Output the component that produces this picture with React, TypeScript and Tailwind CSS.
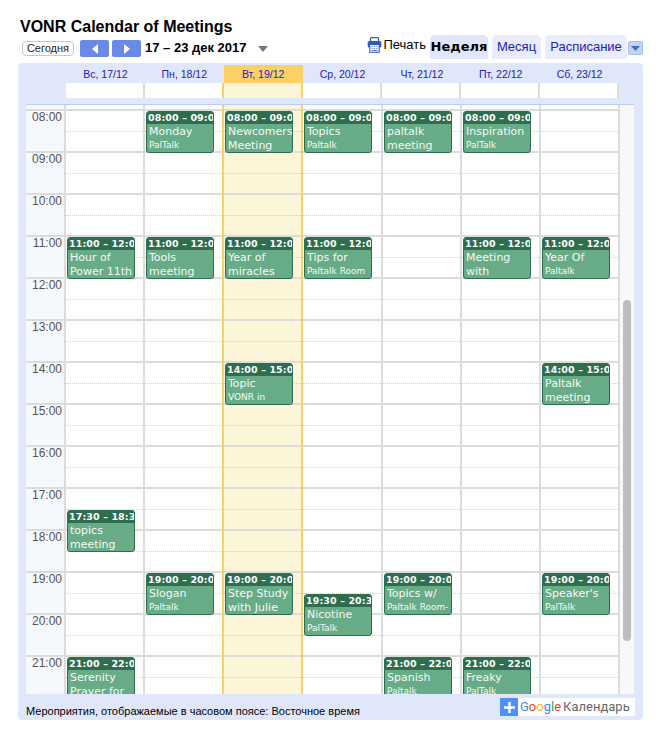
import React from "react";

type Ev = { day: number; hour: number; offset?: number; time: string; title: string[]; sub?: string };

const days = ["Вс, 17/12", "Пн, 18/12", "Вт, 19/12", "Ср, 20/12", "Чт, 21/12", "Пт, 22/12", "Сб, 23/12"];
const hours = [8, 9, 10, 11, 12, 13, 14, 15, 16, 17, 18, 19, 20, 21];
const colWidths = [79, 79, 79, 80, 79, 79, 79];

const events: Ev[] = [
  { day: 1, hour: 8, time: "08:00 – 09:00", title: ["Monday"], sub: "PalTalk" },
  { day: 2, hour: 8, time: "08:00 – 09:00", title: ["Newcomers", "Meeting"] },
  { day: 3, hour: 8, time: "08:00 – 09:00", title: ["Topics"], sub: "Paltalk" },
  { day: 4, hour: 8, time: "08:00 – 09:00", title: ["paltalk", "meeting"] },
  { day: 5, hour: 8, time: "08:00 – 09:00", title: ["Inspiration"], sub: "PalTalk" },
  { day: 0, hour: 11, time: "11:00 – 12:00", title: ["Hour of", "Power 11th"] },
  { day: 1, hour: 11, time: "11:00 – 12:00", title: ["Tools", "meeting"] },
  { day: 2, hour: 11, time: "11:00 – 12:00", title: ["Year of", "miracles"] },
  { day: 3, hour: 11, time: "11:00 – 12:00", title: ["Tips for"], sub: "Paltalk Room" },
  { day: 5, hour: 11, time: "11:00 – 12:00", title: ["Meeting", "with"] },
  { day: 6, hour: 11, time: "11:00 – 12:00", title: ["Year Of"], sub: "Paltalk" },
  { day: 2, hour: 14, time: "14:00 – 15:00", title: ["Topic"], sub: "VONR in" },
  { day: 6, hour: 14, time: "14:00 – 15:00", title: ["Paltalk", "meeting"] },
  { day: 0, hour: 17, offset: 21, time: "17:30 – 18:30", title: ["topics", "meeting"] },
  { day: 1, hour: 19, time: "19:00 – 20:00", title: ["Slogan"], sub: "Paltalk" },
  { day: 2, hour: 19, time: "19:00 – 20:00", title: ["Step Study", "with Julie"] },
  { day: 3, hour: 19, offset: 21, time: "19:30 – 20:30", title: ["Nicotine"], sub: "PalTalk" },
  { day: 4, hour: 19, time: "19:00 – 20:00", title: ["Topics w/"], sub: "Paltalk Room-" },
  { day: 6, hour: 19, time: "19:00 – 20:00", title: ["Speaker's"], sub: "PalTalk" },
  { day: 0, hour: 21, time: "21:00 – 22:00", title: ["Serenity", "Prayer for"] },
  { day: 4, hour: 21, time: "21:00 – 22:00", title: ["Spanish"], sub: "Paltalk" },
  { day: 5, hour: 21, time: "21:00 – 22:00", title: ["Freaky"], sub: "PalTalk" },
];

function EventCard({ ev }: { ev: Ev }) {
  return (
    <div
      className="absolute left-px w-[68px] h-[42px] rounded-[3px] border border-[#2e6e4f] bg-[#68ab87] overflow-hidden z-10 text-white font-['DejaVu_Sans',sans-serif]"
      style={{ top: ev.offset ?? 0 }}
    >
      <div className="h-3 bg-[#2e6e4f] pl-px text-[9.5px] leading-3 font-bold whitespace-nowrap overflow-hidden tracking-[0.1px]">
        {ev.time}
      </div>
      <div className="pl-0.5 pt-px">
        {ev.title.map((t) => (
          <div key={t} className="text-[11px] leading-[14px] whitespace-nowrap overflow-hidden text-[#f4faf6]">
            {t}
          </div>
        ))}
        {ev.sub && <div className="text-[9px] leading-[12px] whitespace-nowrap overflow-hidden text-[#f4faf6]">{ev.sub}</div>}
      </div>
    </div>
  );
}

function HourCell({ children, time }: { children?: React.ReactNode; time?: boolean }) {
  return (
    <div className="relative h-[42px] shrink-0 border-t-2 border-[#dcdcdc]">
      {!time && <div className="absolute left-0 right-0 top-[20px] border-t border-dotted border-[#cfcfcf]" />}
      {children}
    </div>
  );
}

function PrinterIcon() {
  return (
    <svg width="15" height="16" viewBox="0 0 15 16" fill="none" className="mr-px">
      <rect x="3.5" y="0.7" width="8" height="4" rx="1" stroke="#2f5fb5" strokeWidth="1.3" fill="#fff" />
      <rect x="0.7" y="4" width="13.6" height="6.5" rx="1.5" fill="#2f5fb5" />
      <rect x="2.8" y="7.5" width="9.4" height="7.8" fill="#fff" stroke="#2f5fb5" strokeWidth="1.1" />
      <path d="M4.5 9.5h1.2M6.9 9.5h1.2M9.3 9.5h1.2M4.5 11.5h1.2M6.9 11.5h1.2M9.3 11.5h1.2M4.5 13.5h6" stroke="#5b7fc4" strokeWidth="1" />
    </svg>
  );
}

function NavButton({ dir }: { dir: "l" | "r" }) {
  return (
    <div className="w-[29px] h-[17px] rounded-[2px] bg-[#6b8ae8] flex items-center justify-center">
      <svg width="6" height="10" viewBox="0 0 6 10">
        <path d={dir === "l" ? "M6 0v10L0 5z" : "M0 0v10l6-5z"} fill="#fff" />
      </svg>
    </div>
  );
}

export default function App() {
  return (
    <div className="w-[656px] h-[737px] bg-white relative overflow-hidden font-['Liberation_Sans',Arial,sans-serif] text-black">
      <div className="pl-5 pt-[17px] h-[40px] text-base leading-[19px] font-bold">VONR Calendar of Meetings</div>

      <div className="flex items-start h-[23px] pl-[22px]">
        <div className="mt-[1px] w-[52px] h-[15px] rounded-[4px] border border-[#c8c8c8] bg-white text-[11px] leading-[13px] text-center text-[#222]">
          Сегодня
        </div>
        <div className="ml-1.5 flex gap-[3px]">
          <NavButton dir="l" />
          <NavButton dir="r" />
        </div>
        <div className="ml-[4px] mt-[-1px] text-[13px] leading-[18px] font-bold whitespace-nowrap w-[113px]">17 – 23 дек 2017</div>
        <svg width="10" height="6" viewBox="0 0 10 6" className="mt-[6px] ml-[0px]">
          <path d="M0 0h10L5 6z" fill="#777" />
        </svg>

        <div className="ml-auto flex items-start pr-[13px] h-[24px] mt-[-5px]">
          <div className="flex items-center h-[20px] mr-[4px] text-[13px]">
            <PrinterIcon />
            <span>Печать</span>
          </div>
          <div className="h-[24px] w-[58px] mr-[4px] rounded-t-[5px] bg-[#e1e7fb] text-[13px] leading-[24px] text-center font-bold text-black font-['DejaVu_Sans',sans-serif] text-[12.5px]">
            Неделя
          </div>
          <div className="h-[24px] w-[49px] mr-[4px] rounded-t-[5px] bg-[#e8ecfb] text-[13px] leading-[24px] text-center text-[#2020c0]">
            Месяц
          </div>
          <div className="h-[24px] w-[82px] rounded-t-[5px] bg-[#e8ecfb] text-[13px] leading-[24px] text-center text-[#2020c0] whitespace-nowrap">
            Расписание
          </div>
          <div className="ml-px mt-[6px] w-[15px] h-[14px] rounded-[2px] border border-[#a9bfe8] bg-[#c3d4f3] flex items-center justify-center">
            <svg width="9" height="5" viewBox="0 0 9 5">
              <path d="M0 0h9L4.5 5z" fill="#3d6ac4" />
            </svg>
          </div>
        </div>
      </div>

      <div className="ml-[18px] w-[625px] h-[657px] rounded-[4px] bg-[#e1e7fb] flex flex-col">
        <div className="pt-[2px] pl-[48px] pr-[24px]">
          <div className="flex h-[18px]">
            {days.map((d, i) => (
              <div
                key={d}
                style={{ width: colWidths[i] }}
                className={`text-[10.5px] leading-[18px] text-center text-[#2020c0] ${i === 2 ? "bg-[#fcd065]" : ""}`}
              >
                {d}
              </div>
            ))}
          </div>
          <div className="flex h-[15px] bg-white">
            {days.map((d, i) => (
              <div
                key={d}
                style={{ width: colWidths[i] }}
                className={`border-r-2 ${i === 2 ? "bg-[#fdf5d8] border-[#fcd065]" : i === 1 ? "border-[#fcd065] " : "border-[#dcdcdc]"}`}
              />
            ))}
          </div>
        </div>

        <div className="mt-[6px] ml-2 mr-[9px] h-[590px] flex overflow-hidden border-t border-[#bccdf5] bg-white">
          <div className="w-[40px] shrink-0 bg-[#f5f8fc] border-r-2 border-[#dcdcdc]">
            <div className="h-1" />
            {hours.map((h) => (
              <HourCell key={h} time>
                <div className="pr-[2px] pt-[0px] text-right text-[12px] leading-[13px] text-[#555]">{String(h).padStart(2, "0")}:00</div>
              </HourCell>
            ))}
          </div>
          {days.map((d, i) => (
            <div
              key={d}
              style={{ width: colWidths[i] }}
              className={`shrink-0 border-r-2 ${i === 2 ? "bg-[#fdf5d8] border-[#fcd065]" : i === 1 ? "border-[#fcd065]" : "border-[#dcdcdc]"}`}
            >
              <div className="h-1" />
              {hours.map((h) => (
                <HourCell key={h}>
                  {events
                    .filter((e) => e.day === i && e.hour === h)
                    .map((e) => (
                      <EventCard key={e.time + e.title[0]} ev={e} />
                    ))}
                </HourCell>
              ))}
            </div>
          ))}
          <div className="flex-1 bg-[#f8f8f8] relative pl-[3px]">
            <div className="mt-[195px] w-[8px] h-[341px] rounded-[4px] bg-[#bdbdbd]" />
          </div>
        </div>

        <div className="flex items-start h-[26px] pl-2 pr-[8px]">
          <div className="mt-[10px] text-[11px] leading-[14px] whitespace-nowrap">Мероприятия, отображаемые в часовом поясе: Восточное время</div>
          <div className="ml-auto mt-[4px] w-[135px] h-[18px] bg-white flex items-center">
            <div className="w-[18px] h-[18px] bg-[#4d90fe] flex items-center justify-center">
              <svg width="11" height="11" viewBox="0 0 11 11">
                <path d="M4.3 0h2.4v4.3H11v2.4H6.7V11H4.3V6.7H0V4.3h4.3z" fill="#fff" />
              </svg>
            </div>
            <div className="ml-[2px] text-[13px] leading-[18px] whitespace-nowrap font-['Roboto',sans-serif]">
              <span className="text-[#4285f4]">G</span>
              <span className="text-[#ea4335]">o</span>
              <span className="text-[#fbbc05]">o</span>
              <span className="text-[#4285f4]">g</span>
              <span className="text-[#34a853]">l</span>
              <span className="text-[#ea4335]">e</span>
              <span className="ml-[2px] text-[#666]">Календарь</span>
            </div>
          </div>
        </div>
      </div>
    </div>
  );
}
